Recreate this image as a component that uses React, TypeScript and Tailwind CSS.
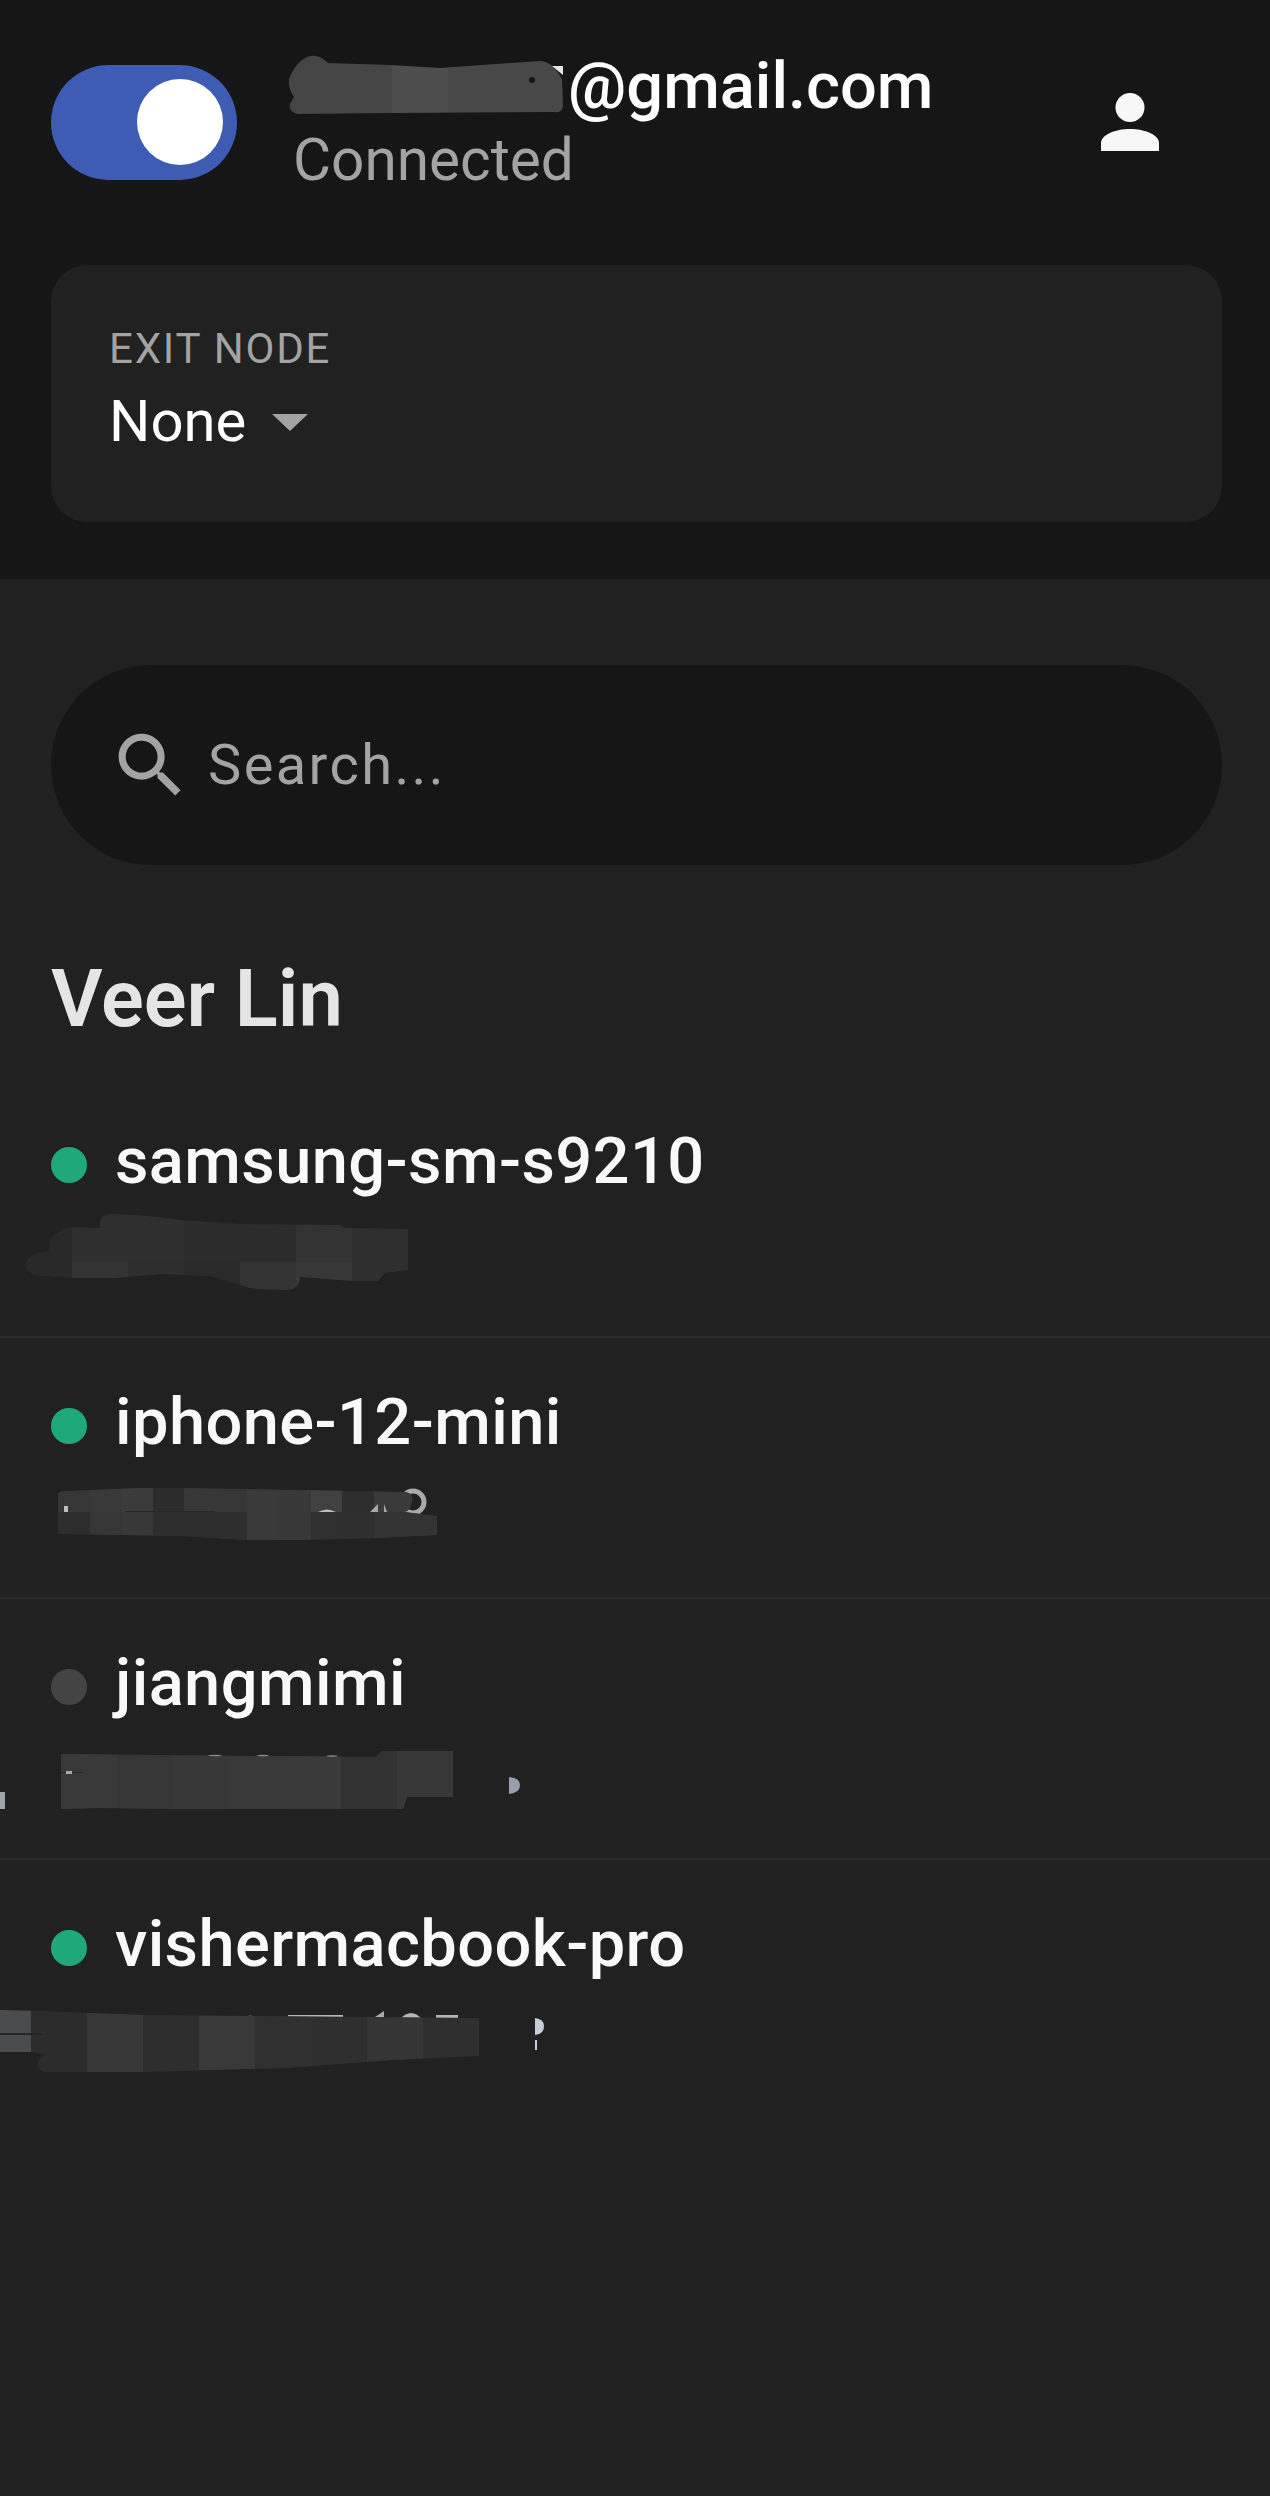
const font = "font-['Roboto','Liberation_Sans',sans-serif]";

interface Tile {
  x: number;
  y: number;
  w: number;
  h: number;
  fill: string;
}

// builds the two bands of mosaic squares used to hide the addresses
function band(xs: number[], y: number, h: number, fills: string[]): Tile[] {
  return fills.map((fill, i) => ({ x: xs[i], y, w: xs[i + 1] - xs[i], h, fill }));
}

function Mosaic({ id, outline, tiles, base }: { id: string; outline: string; tiles: Tile[]; base: string }) {
  return (
    <>
      <clipPath id={id}>
        <path d={outline} />
      </clipPath>
      <g clipPath={`url(#${id})`}>
        <path d={outline} fill={base} />
        {tiles.map((t, i) => (
          <rect key={i} x={t.x} y={t.y} width={t.w} height={t.h} fill={t.fill} />
        ))}
      </g>
    </>
  );
}

function BlobSamsung() {
  const xs = [72, 128, 184, 240, 296, 352, 408];
  const tiles = [
    ...band(xs, 0, 62, ['#2f2f2f', '#2f2f2f', '#2c2c2c', '#2c2c2c', '#333333', '#2f2f2f']),
    ...band(xs, 62, 40, ['#333333', '#2e2e2e', '#2a2a2a', '#333333', '#373737', '#2f2f2f']),
  ];
  return (
    <svg width="620" height="100" className="block">
      <Mosaic
        id="blob-1"
        base="#292929"
        tiles={tiles}
        outline="M25 65 Q27 53 49 51 Q48 38 57 33 Q64 27 72 27 L100 28 Q98 14 112 14 Q150 15 180 20 L240 24 L340 25 L345 28 L408 29 L408 70 L385 73 L378 81 L352 81 L300 77 Q300 90 285 90 Q262 90 250 88 L220 79 L210 76 L160 74 L115 78 L72 78 L40 76 Q26 74 25 65 Z"
      />
    </svg>
  );
}

function BlobIphone() {
  const xs = [58, 90, 122, 153, 184, 216, 247, 279, 311, 342, 374, 405, 437];
  const tiles = [
    ...band(xs, 20, 31, ['#363636', '#393939', '#3b3b3b', '#2c2c2c', '#383838', '#363636', '#3a3a3a', '#383838', '#414141', '#2d2d2d', '#3a3a3a', '#3a3a3a']),
    ...band(xs, 51, 30, ['#2e2e2e', '#363636', '#383838', '#2e2e2e', '#2d2d2d', '#2e2e2e', '#3a3a3a', '#383838', '#303030', '#2f2f2f', '#333333', '#333333']),
  ];
  return (
    <svg width="620" height="100" className="block">
      <circle cx="413" cy="41" r="11" fill="none" stroke="#aaaaaa" strokeWidth="5" />
      <Mosaic
        id="blob-2"
        base="#333333"
        tiles={tiles}
        outline="M58 33 Q58 30 66 30 L140 27 L180 27 L300 29 L404 31 Q414 31 412 41 Q410 50 405 51 L437 55 L437 74 L380 77 L300 79 L247 79 L180 75 L58 73 Z"
      />
      <path d="M318 51 Q327 46 336 51 Z" fill="#bdbdbd" />
      <path d="M370 51 L378 43 L378 51 Z M384 51 L384 43 L387 51 Z" fill="#a8a8a8" />
      <rect x="64" y="45" width="4" height="6" fill="#bdbdbd" />
      <rect x="125" y="50" width="90" height="1" fill="#262626" />
    </svg>
  );
}

function BlobJiang() {
  const xs = [61, 117, 173, 229, 285, 341, 397, 453];
  const tiles = band(xs, 20, 70, ['#393939', '#363636', '#383838', '#393939', '#3a3a3a', '#323232', '#383838']);
  return (
    <svg width="620" height="100" className="block">
      <rect x="0" y="70" width="5" height="17" fill="#a0a3ad" />
      <path d="M509 55 Q520 56 520 63 Q520 71 509 72 Z" fill="#9a9dab" />
      <Mosaic
        id="blob-3"
        base="#383838"
        tiles={tiles}
        outline="M61 32 L160 33 L375 35 L382 29 L453 29 L453 75 L407 75 L403 87 L160 87 L100 86 L61 87 Z"
      />
      <rect x="61" y="50" width="22" height="1" fill="#2a2a2a" />
      <rect x="66" y="49" width="6" height="3" fill="#a8a8a8" />
      <ellipse cx="215" cy="33.500" rx="7" ry="0.7" fill="#8a8a8a" />
      <ellipse cx="263" cy="33.500" rx="6" ry="0.7" fill="#8a8a8a" />
      <ellipse cx="332" cy="34" rx="6" ry="0.7" fill="#8a8a8a" />
    </svg>
  );
}

function BlobVisher() {
  const xs = [0, 31, 87, 143, 199, 255, 311, 367, 423, 479];
  const tiles = band(xs, 20, 75, ['#4a4b4d', '#2c2c2c', '#383838', '#2e2e2e', '#393939', '#303030', '#2f2f2f', '#353535', '#2f2f2f']);
  return (
    <svg width="620" height="100" className="block">
      <rect x="288" y="32" width="55" height="4" fill="#b5b5b5" />
      <rect x="436" y="32" width="22" height="4" fill="#b5b5b5" />
      <path d="M400 36 Q411 24 422 36 Z" fill="#b5b5b5" />
      <path d="M372 36 L384 28 L384 36 Z" fill="#a8a8a8" />
      <path d="M245 35 Q250 30 256 35 Z" fill="#a8a8a8" />
      <Mosaic
        id="blob-4"
        base="#2c2c2c"
        tiles={tiles}
        outline="M0 27 L40 28 L143 32 L479 35 L479 73 L393 77 L286 85 L143 89 L46 89 Q38 88 38 80 Q38 74 46 72 L31 69 L0 69 Z"
      />
      <rect x="0" y="50" width="42" height="2" fill="#262626" />
      <path d="M535 35 Q544 36 544 43 Q544 51 535 52 Z" fill="#c8cbd8" />
      <rect x="535" y="57" width="2" height="10" fill="#c8cbd8" />
    </svg>
  );
}

const devices = [
  { name: 'samsung-sm-s9210', online: true, blob: <BlobSamsung /> },
  { name: 'iphone-12-mini', online: true, blob: <BlobIphone /> },
  { name: 'jiangmimi', online: false, blob: <BlobJiang /> },
  { name: 'vishermacbook-pro', online: true, blob: <BlobVisher /> },
];

function App() {
  return (
    <div className={`${font} min-h-screen bg-[#212121] antialiased`}>
      <header className="h-[579px] bg-[#161616] pt-[50px] pr-[48px] pl-[51px]">
        <div className="flex h-[144px] items-center">
          <div className="flex h-[115px] w-[186px] shrink-0 items-center justify-end rounded-full bg-[#3f5cb5] pr-[14px]">
            <div className="h-[86px] w-[86px] rounded-full bg-white" />
          </div>
          <div className="ml-[50px] flex flex-col">
            <div className="flex h-[62px] items-center">
              <svg width="282" height="62" viewBox="7 10 282 62" className="shrink-0">
                <clipPath id="blob-mail">
                  <path d="M9 35 Q14 22 22 16 Q35 6 48 19 L110 21 L160 24 L260 17 Q272 17 282 35 L283 62 Q282 69 275 68 L110 69 L18 70 Q8 68 10 60 L14 53 Q8 45 9 35 Z" />
                </clipPath>
                <g clipPath="url(#blob-mail)">
                  <rect x="0" y="0" width="112" height="90" fill="#454545" />
                  <rect x="112" y="0" width="56" height="90" fill="#4d4d4d" />
                  <rect x="168" y="0" width="130" height="90" fill="#484848" />
                </g>
                <circle cx="252" cy="36" r="3" fill="#161616" />
                <path d="M272 22 L283 22 L283 31 Z" fill="#e5e5e5" />
              </svg>
              <span className="mt-[3px] -ml-[1px] text-[65px] leading-none font-medium text-white">@gmail.com</span>
            </div>
            <span className="mt-[13px] ml-[6px] text-[58.500px] leading-[62px] text-[#a3a3a3]">Connected</span>
          </div>
          <svg width="58" height="58" viewBox="0 0 58 58" className="mr-[63px] ml-auto shrink-0" fill="#f7f7f7">
            <circle cx="29" cy="14.5" r="14.5" />
            <path d="M0 58 V50 C0 42 14 36 29 36 C44 36 58 42 58 50 V58 Z" />
          </svg>
        </div>
        <div className="mt-[71px] flex h-[257px] flex-col justify-center rounded-[36px] bg-[#212121] px-[58px] pb-[7px]">
          <span className="text-[42px] leading-[50px] tracking-[1.8px] text-[#a3a3a3]">EXIT NODE</span>
          <div className="mt-[12px] flex items-center">
            <span className="text-[58px] leading-[70px] text-white">None</span>
            <svg width="36" height="17" viewBox="0 0 36 17" className="mt-[2px] ml-[26px]" fill="#a3a3a3">
              <path d="M0 0 H36 L18 17 Z" />
            </svg>
          </div>
        </div>
      </header>
      <main>
        <div className="mt-[86px] mr-[48px] ml-[51px] flex h-[200px] items-center rounded-full bg-[#161616] pl-[57px]">
          <svg width="85" height="85" viewBox="0 0 24 24" fill="#a3a3a3" className="shrink-0">
            <path d="M15.5 14h-.79l-.28-.27C15.41 12.59 16 11.11 16 9.5 16 5.91 13.09 3 9.5 3S3 5.91 3 9.5 5.91 16 9.5 16c1.61 0 3.09-.59 4.23-1.57l.27.28v.79l5 4.99L20.49 19l-4.99-5zm-6 0C7.01 14 5 11.99 5 9.5S7.01 5 9.5 5 14 7.01 14 9.5 11.99 14 9.5 14z" />
          </svg>
          <span className="ml-[15px] text-[56px] leading-none tracking-[2.4px] text-[#a3a3a3]">Search...</span>
        </div>
        <h2 className="mx-[51px] mt-[84px] mb-[28px] text-[79.500px] leading-[100px] font-semibold text-[#e5e5e5]">Veer Lin</h2>
        {devices.map((device, i) => (
          <div key={device.name} className={`pt-[53px] ${i < devices.length - 1 ? 'border-b-2 border-[#2b2b2b] pb-[36px]' : ''}`}>
            <div className="flex h-[70px] items-center pl-[51px]">
              <div className={`h-[36px] w-[36px] rounded-full ${device.online ? 'bg-[#1fa97b]' : 'bg-[#444444]'}`} />
              <span className="ml-[28px] pb-[8px] text-[65px] leading-none font-medium tracking-[0.4px] text-[#f9f9f9]">{device.name}</span>
            </div>
            {device.blob}
          </div>
        ))}
      </main>
    </div>
  );
}

export default App;
